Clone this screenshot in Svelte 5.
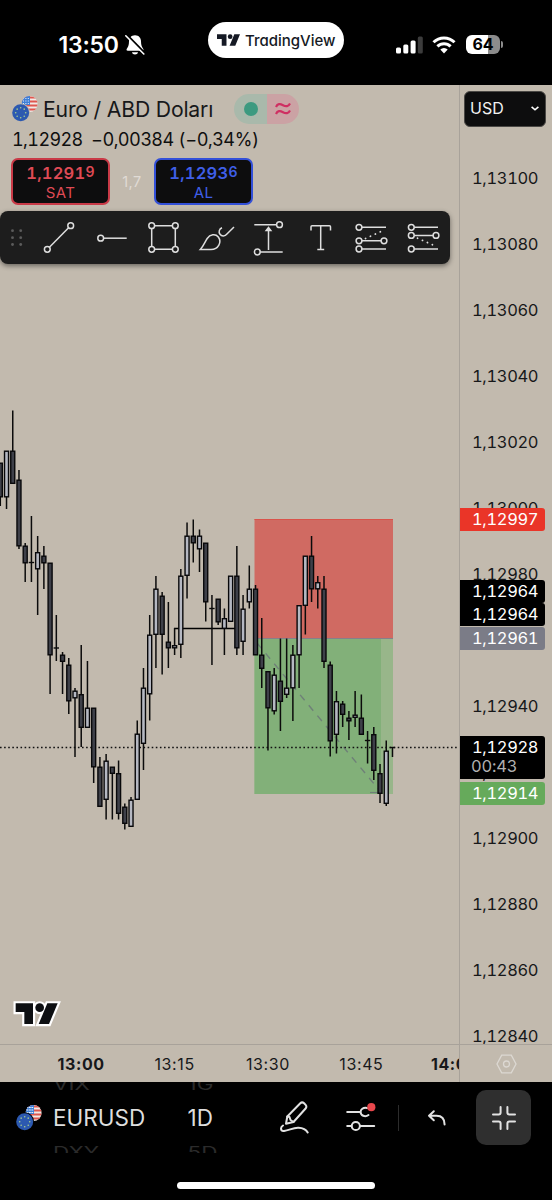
<script lang="ts">
  interface Candle {
    x: number;
    high: number;
    top: number;
    bottom: number;
    low: number;
    up: boolean;
  }

  const STEP = 6.225;
  const CHART_TOP = 85;

  // high, top, bottom, low, rising
  const rows: [number, number, number, number, number][] = [
    [463, 463, 497, 506, 0],
    [451, 451, 497, 509, 1],
    [410.5, 451, 483.5, 483.5, 0],
    [470, 480, 546, 549, 0],
    [543, 546, 563, 582, 0],
    [516, 562.5, 562.5, 582, 0],
    [536, 552.5, 569, 615, 1],
    [546, 556, 563, 589, 0],
    [563, 563, 655, 694, 0],
    [615, 648, 648, 661, 0],
    [652, 655, 661.5, 694, 0],
    [658, 665, 701, 714, 0],
    [688, 691, 698, 757, 1],
    [645, 694.5, 727.5, 747, 0],
    [661, 708, 727.5, 727.5, 1],
    [708, 708, 767, 783, 0],
    [757, 767, 806.5, 806.5, 0],
    [754, 761, 799.5, 819.5, 1],
    [767, 767, 773.5, 819.5, 0],
    [760.5, 773.5, 813.5, 819.5, 0],
    [803.5, 807, 823.5, 829.5, 0],
    [797, 800, 826.5, 826.5, 1],
    [720.5, 734, 799.5, 799.5, 1],
    [668, 688, 743.5, 770, 1],
    [615, 635, 694, 720.5, 1],
    [576, 589, 634.5, 668, 1],
    [592, 596, 634.5, 674.5, 0],
    [602, 642, 648, 668, 0],
    [628, 645.5, 648, 655, 1],
    [569, 576, 644.5, 658, 1],
    [522.5, 536, 575.5, 598.5, 1],
    [519.5, 536, 543, 562.5, 0],
    [529.5, 536, 549, 572, 1],
    [543, 543, 602, 621.5, 0],
    [595, 608.5, 608.5, 665, 0],
    [599, 599, 622, 625, 0],
    [608.5, 618.5, 628.5, 655, 1],
    [576, 576, 621.5, 621.5, 1],
    [546, 576, 648, 655, 0],
    [595, 609, 641.5, 655, 1],
    [565.5, 589, 602, 608.5, 1],
    [585, 589, 655, 655, 0],
    [618, 655, 668.5, 688, 0],
    [671.5, 671.5, 708, 750.5, 0],
    [668, 675, 711, 714.5, 1],
    [638.5, 681, 701.5, 731, 0],
    [638.5, 688, 694.5, 698, 1],
    [645, 655, 688, 721, 1],
    [605.5, 605.5, 655, 688, 1],
    [556, 556, 605.5, 634.5, 1],
    [536, 556, 589, 602, 0],
    [576, 582.5, 589, 608.5, 1],
    [576, 589, 661.5, 668, 0],
    [661.5, 665, 741, 756.5, 0],
    [691, 701.5, 734.5, 753.5, 1],
    [701, 704, 714.5, 727, 0],
    [711, 718, 721, 740, 0],
    [691, 715, 717.5, 727, 1],
    [694.5, 718, 734.5, 734.5, 0],
    [731, 740.5, 740.5, 763.5, 0],
    [727, 734.5, 770.5, 780, 0],
    [764, 773.5, 793.5, 803, 0],
    [740.5, 751, 803.5, 806, 1],
    [747.5, 747.5, 747.5, 757, 0],
  ];

  const candles: Candle[] = rows.map(([high, top, bottom, low, up], i) => ({
    x: 0.3 + i * STEP,
    high: high - CHART_TOP,
    top: top - CHART_TOP,
    bottom: bottom - CHART_TOP,
    low: low - CHART_TOP,
    up: up === 1,
  }));

  const prices = Array.from({ length: 14 }, (_, i) => "1," + (13100 - i * 20));

  const tags = [
    { text: "1,12997", y: 423, kind: "stop" },
    { text: "1,12964", y: 495, kind: "dark" },
    { text: "1,12964", y: 518, kind: "dark" },
    { text: "1,12961", y: 542, kind: "entry" },
    { text: "1,12914", y: 697, kind: "target" },
  ];

  const times = ["13:00", "13:15", "13:30", "13:45", "14:00"];
  const stars = Array.from({ length: 8 }, (_, i) => (i * Math.PI) / 4);
</script>

{#snippet logo()}
  <path d="M0 0H52V62H26V26H0Z" />
  <circle cx="72" cy="13" r="13" />
  <path d="M95 0H126L100 62H69Z" />
{/snippet}

{#snippet flags(ring: string)}
  <svg class="flags" width="28" height="28" viewBox="0 0 28 28">
    <clipPath id="us"><circle cx="18.6" cy="9" r="8" /></clipPath>
    <g clip-path="url(#us)">
      <rect x="10" width="18" height="18" fill="#f1e9e6" />
      <path d="M10 2.5h18M10 6.5h18M10 10.5h18M10 14.5h18" stroke="#e0574f" stroke-width="2" />
      <rect x="10" y="0" width="9" height="10" fill="#3f7fd6" />
      <path d="M12 3.5h6.5M12 6h6.5M12 8.5h6.5" stroke="#e8f0fb" stroke-width="1" stroke-dasharray="1 1.4" />
    </g>
    <circle cx="9.7" cy="17.7" r="9.4" fill={ring} />
    <circle cx="9.7" cy="17.7" r="8.5" fill="#2c59b0" />
    {#each stars as a}
      <circle cx={9.7 + 5 * Math.cos(a)} cy={17.7 + 5 * Math.sin(a)} r="0.8" fill="#a9cf8c" />
    {/each}
  </svg>
{/snippet}

<div class="screen">
  <header class="status">
    <div class="clock">
      <span>13:50</span>
      <svg width="20" height="22" viewBox="0 0 20 22">
        <path d="M10 1.2c-4 0-6 3-6 6.3 0 4-1 5.5-2.3 7.5-.5 1 0 1.7 1 1.7h14.6c1 0 1.5-.7 1-1.7C17 13 16 11.5 16 7.5c0-3.3-2-6.3-6-6.3Z" fill="#fff" />
        <path d="M7 18.2h6c-.4 3-5.6 3-6 0Z" fill="#fff" />
        <path d="M1.8.8 20 19.2" stroke="#000" stroke-width="2.2" />
        <path d="M.8 1.8 18.8 20" stroke="#fff" stroke-width="1.6" stroke-linecap="round" />
      </svg>
    </div>
    <div class="pill">
      <svg width="23" height="12" viewBox="0 0 126 62" fill="#151924">{@render logo()}</svg>
      <span>TradingView</span>
    </div>
    <div class="indicators">
      <svg width="27" height="18" viewBox="0 0 27 18" fill="#fff">
        <rect x="0" y="11.5" width="5" height="6" rx="1.5" />
        <rect x="7.3" y="8.5" width="5" height="9" rx="1.5" />
        <rect x="14.6" y="4.5" width="5" height="13" rx="1.5" />
        <rect x="21.8" y="0.5" width="5" height="17" rx="1.5" fill="#3c3c3c" />
      </svg>
      <svg class="wifi" width="24" height="18" viewBox="0 0 24 18" fill="none" stroke="#fff" stroke-width="3">
        <path d="M1.5 6.3a15 15 0 0 1 21 0" />
        <path d="M5.4 10.4a9.4 9.4 0 0 1 13.2 0" />
        <path d="M8.3 13.6a5.3 5.3 0 0 1 7.4 0L12 17.5Z" fill="#fff" stroke="none" />
      </svg>
      <div class="battery"><span>64</span></div>
    </div>
  </header>

  <main class="workspace">
    <section class="chart">
      <svg class="plot" width="459" height="959" viewBox="0 0 459 959">
        <rect x="254.5" y="434" width="138.5" height="119.5" fill="#d06a62" />
        <path d="M254.5 434.5H393" stroke="#d9534b" />
        <rect x="254.5" y="553.5" width="138.5" height="155.5" fill="#98b68a" />
        <rect x="254.5" y="553.5" width="126.5" height="155.5" fill="#82b079" />
        <path d="M254.5 553.5H393" stroke="#85808a" />
        <path d="M257 558 L380 706" stroke="#6f8078" stroke-width="1.4" stroke-dasharray="7 6.5" />
        <path d="M370 707.5h10" stroke="#6f8078" stroke-width="1.2" />
        <path d="M174 543.5H238" stroke="#000" stroke-width="1.3" />
        <path d="M0 662.5H459" stroke="#111" stroke-width="1.5" stroke-dasharray="1.6 2.5" />
        {#each candles as c}
          <path d="M{c.x} {c.high}V{c.low}" stroke="#0b0b0b" stroke-width="1.5" />
          {#if c.bottom - c.top < 1}
            <path d="M{c.x - 2.7} {c.top}h5.4" stroke="#0b0b0b" stroke-width="1.4" />
          {:else}
            <rect
              x={c.x - 2}
              y={c.top + 0.2}
              width="4"
              height={Math.max(c.bottom - c.top - 0.4, 1.5)}
              fill={c.up ? "#b5b8c2" : "#3e4049"}
              stroke="#08080a"
              stroke-width="1.4"
            />
          {/if}
        {/each}
      </svg>

      <div class="legend">
        <div class="title">
          {@render flags("#c2baae")}
          <h1>Euro / ABD Doları</h1>
          <div class="market">
            <span class="open"><i></i></span>
            <span class="approx">
              <svg width="16" height="14" viewBox="0 0 16 14" fill="none" stroke="#cf2f62" stroke-width="2.2">
                <path d="M1 5C2.5 1.5 5 1.5 8 3.2S13.5 4.5 15 1.5M1 12C2.5 8.5 5 8.5 8 10.2S13.5 11.5 15 8.5" />
              </svg>
            </span>
          </div>
        </div>
        <p class="quote"><span class="last-price">1,12928</span><span>−0,00384 (−0,34%)</span></p>
        <div class="trade">
          <button class="sell"><b>1,1291<small>9</small></b><span>SAT</span></button>
          <span class="spread">1,7</span>
          <button class="buy"><b>1,1293<small>6</small></b><span>AL</span></button>
        </div>
        <div class="tools">
          <svg class="grip" width="33" height="53" viewBox="0 0 33 53" fill="#5c5c5c">
            {#each [19.7, 26.7, 33.5] as y}
              <circle cx="12.5" cy={y} r="1.4" />
              <circle cx="20.7" cy={y} r="1.4" />
            {/each}
          </svg>
          <svg class="tool" viewBox="0 0 52 53">
            <path d="M16.4 36.2 35.6 16.8" />
            <circle cx="14.3" cy="38.3" r="2.9" /><circle cx="37.7" cy="14.7" r="2.9" />
          </svg>
          <svg class="tool" viewBox="0 0 52 53">
            <circle cx="15.7" cy="27.2" r="2.9" /><path d="M18.6 27.2H41.7" />
          </svg>
          <svg class="tool" viewBox="0 0 52 53">
            <path d="M17.6 14.7h17.8M17.6 38.3h17.8M14.7 17.6v17.8M38.3 17.6v17.8" />
            <circle cx="14.7" cy="14.7" r="2.9" /><circle cx="38.3" cy="14.7" r="2.9" />
            <circle cx="14.7" cy="38.3" r="2.9" /><circle cx="38.3" cy="38.3" r="2.9" />
          </svg>
          <svg class="tool" viewBox="0 0 52 53">
            <path d="M11.3 38.4C15 34.5 15.8 31 18.2 27.5 21 23.3 26.5 22.5 29.3 26 33 31 29.5 38.4 22 38.4Z" />
            <path d="M33 16.8C30.2 18 29.3 21 31 23.3S35.8 25.7 38.2 22.8L45 16" />
          </svg>
          <svg class="tool" viewBox="0 0 52 53">
            <path d="M13.3 13.7H35.6M19.2 41H41.7M27.5 39V17" />
            <circle cx="38.5" cy="13.7" r="2.9" /><circle cx="16.3" cy="41" r="2.9" />
            <path d="M25.2 19.5 27.5 16.5 29.8 19.5Z" fill="#dedede" />
          </svg>
          <svg class="tool" viewBox="0 0 52 53">
            <path d="M18 19.5V15.8q0-1 1-1h17.5q1 0 1 1v3.7M27.7 14.8v23.7M24.3 38.5h6.9" />
          </svg>
          <svg class="tool" viewBox="0 0 52 53">
            <path d="M16.9 16.3H41M16.9 29.8H36.2M16.9 38H41" />
            <path class="dots" d="M20.5 27.5 40 18.7" />
            <circle cx="14" cy="16.3" r="2.9" /><circle cx="14" cy="29.8" r="2.9" />
            <circle cx="39" cy="29.8" r="2.9" /><circle cx="14" cy="38" r="2.9" />
          </svg>
          <svg class="tool" viewBox="0 0 52 53">
            <path d="M17.2 16.3H41M17.2 24.4H36.2M17.2 38H41" />
            <path class="dots" d="M20.5 27.2 40 35.7" />
            <circle cx="14.3" cy="16.3" r="2.9" /><circle cx="14.3" cy="24.4" r="2.9" />
            <circle cx="39" cy="24.4" r="2.9" /><circle cx="14.3" cy="38" r="2.9" />
          </svg>
        </div>
      </div>

      <svg class="watermark" width="48" height="27" viewBox="-8 -10 144 81">
        <g fill="#fff" stroke="#fff" stroke-width="13">{@render logo()}</g>
        <g fill="#0d0f12">{@render logo()}</g>
      </svg>
    </section>

    <aside class="scale">
      <div class="labels">
        {#each prices as price}
          <span>{price}</span>
        {/each}
      </div>
      {#each tags as tag}
        <div class="tag {tag.kind}" style:top="{tag.y}px">{tag.text}</div>
      {/each}
      <div class="tag dark last" style:top="651px">
        <span>1,12928</span>
        <span class="countdown">00:43</span>
      </div>
      <div class="currency">
        <span>USD</span>
        <svg width="8" height="5" viewBox="0 0 8 5" fill="none" stroke="#fff" stroke-width="1.6">
          <path d="M.6 .8 4 3.8 7.4 .8" />
        </svg>
      </div>
    </aside>

    <div class="times">
      {#each times as time, i}
        <span class:hour={i % 4 === 0}>{time}</span>
      {/each}
    </div>
    <div class="corner">
      <svg width="21" height="20" viewBox="0 0 21 20" fill="none" stroke="#dcd8d2" stroke-width="1.3">
        <path d="M5.7 1.2h9.6L20 10l-4.7 8.8H5.7L1 10Z" />
        <circle cx="10.5" cy="10" r="3" />
      </svg>
    </div>
  </main>

  <footer class="dock">
    <div class="bar">
      {@render flags("#000")}
      <div class="wheel symbol">
        <span class="ghost">VIX</span>
        <span>EURUSD</span>
        <span class="ghost">DXY</span>
      </div>
      <div class="wheel interval">
        <span class="ghost">1G</span>
        <span>1D</span>
        <span class="ghost">5D</span>
      </div>
      <svg class="pen" width="30" height="34" viewBox="0 0 30 34">
        <path d="M7.3 15.5 20.3 2.3q1.800-1.800 3.800 0l1.500 1.600q1.500 1.900 0 3.600L13.500 21 6 22.800Z" />
        <path d="M7.3 15.5 9.5 16l1 3 3 2" />
        <path d="M3 24.5C0 26.5.5 30.5 4 30 9.5 29.3 13 26.5 18.5 26.8 23 27 26 28.5 27.7 31.5" />
      </svg>
      <svg class="sliders" width="32" height="34" viewBox="0 0 32 34">
        <path d="M2.2 11H15.5M2.2 25H6.5M15 25H29.2M22 7C18 6.3 15.600 8.500 15.600 11 15.600 14.500 20 16.500 23.500 14" />
        <circle cx="10.8" cy="25" r="4.1" />
        <circle class="dot" cx="26.3" cy="6.2" r="4.1" />
      </svg>
      <i class="divider"></i>
      <svg class="undo" width="20" height="18" viewBox="0 0 20 18">
        <path d="M6.8 2.3 2 6.8 6.8 11.3M2 6.8H9.5C14.5 6.8 17.6 9.5 17.6 15.6" />
      </svg>
      <button class="collapse" aria-label="Collapse">
        <svg width="24" height="24" viewBox="0 0 24 24">
          <path d="M8.6 1V6.6q0 2-2 2H1M15.4 1V6.6q0 2 2 2H23M1 15.4H6.6q2 0 2 2V23M23 15.4H17.4q-2 0-2 2V23" />
        </svg>
      </button>
    </div>
    <div class="home"></div>
  </footer>
</div>

<style>
  :global(body) {
    background: #000;
  }

  .screen {
    width: 552px;
    height: 1200px;
    overflow: hidden;
    display: flex;
    flex-direction: column;
    font-family: Inter, "Liberation Sans", sans-serif;
    background: #000;
    color: #17181a;
  }
  svg {
    display: block;
    flex: none;
  }

  .status {
    height: 85px;
    box-sizing: border-box;
    display: flex;
    align-items: flex-start;
    color: #fff;
  }
  .clock {
    width: 149.5px;
    padding: 34px 0 0 58.5px;
    display: flex;
    align-items: center;
    gap: 6px;
    font-size: 23px;
    line-height: 22px;
    font-weight: 600;
    letter-spacing: -0.2px;
  }
  .pill {
    flex: none;
    width: 136px;
    height: 36px;
    margin-top: 22px;
    box-sizing: border-box;
    padding-left: 9px;
    border-radius: 18px;
    background: #fff;
    color: #151924;
    display: flex;
    align-items: center;
    gap: 5px;
    font-size: 15px;
    font-weight: 500;
    font-feature-settings: "cv11";
  }
  .indicators {
    display: flex;
    align-items: center;
    padding: 35px 0 0 51.5px;
  }
  .wifi {
    margin: 0 10px 0 9.5px;
  }
  .battery {
    position: relative;
    width: 34px;
    height: 19px;
    border-radius: 6px;
    background: linear-gradient(90deg, #fff 64%, #8c8c8c 64%);
    color: #000;
    text-align: center;
    font-size: 16px;
    line-height: 19px;
    font-weight: 700;
  }
  .battery::after {
    content: "";
    position: absolute;
    right: -3px;
    top: 6px;
    width: 2px;
    height: 7px;
    border-radius: 0 2px 2px 0;
    background: #8c8c8c;
  }

  .workspace {
    height: 997px;
    display: grid;
    grid-template: 959px 38px / 459px 93px;
    background: #c2baae;
  }
  .chart {
    display: grid;
    overflow: hidden;
  }
  .plot,
  .legend,
  .watermark {
    grid-area: 1 / 1;
  }
  .watermark {
    align-self: end;
    margin: 0 0 17px 13px;
  }

  .legend {
    padding-top: 8px;
  }
  .title {
    display: flex;
    align-items: center;
    height: 31px;
    padding-left: 11px;
  }
  h1 {
    width: 174px;
    margin: 0 0 0 4px;
    font-size: 21.2px;
    font-weight: 400;
    letter-spacing: -0.19px;
    white-space: nowrap;
  }
  .market {
    display: flex;
    margin-left: 17px;
    border-radius: 15px;
    overflow: hidden;
  }
  .market span {
    width: 32.5px;
    height: 30px;
    display: flex;
    align-items: center;
    justify-content: center;
  }
  .market .open {
    background: #a9b9ab;
  }
  .market .approx {
    background: #cba2a4;
  }
  .open i {
    width: 14px;
    height: 14px;
    margin-left: 2px;
    border-radius: 50%;
    background: #3c9a80;
  }
  .quote {
    display: flex;
    margin: 4px 0 0 12px;
    font-size: 18px;
    line-height: 24px;
    letter-spacing: -0.15px;
    color: #0f0f0f;
  }
  .quote .last-price {
    width: 79px;
    letter-spacing: -0.6px;
    font-kerning: none;
    font-variant-numeric: tabular-nums;
  }
  .trade {
    display: flex;
    align-items: center;
    margin: 6px 0 0 11px;
  }
  .trade button {
    width: 99px;
    height: 47px;
    padding: 0;
    box-sizing: border-box;
    border: 2px solid;
    border-radius: 7px;
    background: #0d0d0e;
    font: inherit;
    display: flex;
    flex-direction: column;
    align-items: center;
    justify-content: center;
    gap: 1px;
  }
  .trade b {
    font-size: 16.5px;
    line-height: 19px;
    font-weight: 600;
    letter-spacing: 0.2px;
    font-kerning: none;
    font-variant-numeric: tabular-nums;
  }
  .trade small {
    font-size: 14px;
    vertical-align: 2px;
  }
  .trade button span {
    font-size: 15px;
    line-height: 18px;
    letter-spacing: 0.4px;
  }
  .trade .sell {
    border-color: #c93a47;
    color: #df4a55;
  }
  .trade .buy {
    border-color: #3350d8;
    color: #3f5fe8;
  }
  .spread {
    width: 44px;
    text-align: center;
    font-size: 14.5px;
    font-kerning: none;
    letter-spacing: 0.4px;
    color: #e0dbd5;
  }
  .tools {
    display: flex;
    width: 450px;
    height: 53px;
    margin-top: 6px;
    border-radius: 8px;
    background: #1d1d1d;
    box-shadow: 0 2px 5px rgba(0, 0, 0, 0.45);
  }
  .tool {
    width: 52px;
    height: 53px;
    fill: none;
    stroke: #dedede;
    stroke-width: 1.5;
  }
  .tool .dots {
    stroke-width: 1.8;
    stroke-linecap: round;
    stroke-dasharray: 0.1 5.3;
  }

  .scale {
    position: relative;
    overflow: hidden;
    border-left: 1px solid #a8a29a;
    font-size: 16.5px;
    letter-spacing: -0.35px;
    font-kerning: none;
    font-variant-numeric: tabular-nums;
  }
  .labels {
    padding: 60px 0 0 12px;
    display: flex;
    flex-direction: column;
  }
  .labels span {
    flex: none;
    height: 66px;
    line-height: 66px;
  }
  .tag {
    position: absolute;
    left: 0;
    width: 85px;
    height: 23px;
    box-sizing: border-box;
    padding-left: 12px;
    border-radius: 0 3px 3px 0;
    color: #fff;
    line-height: 22px;
  }
  .stop {
    background: #ea3528;
  }
  .dark {
    background: #000;
  }
  .entry {
    background: #7b7c87;
  }
  .target {
    background: #66aa5b;
  }
  .last {
    height: 42.5px;
    display: flex;
    flex-direction: column;
  }
  .last .countdown {
    margin-left: -1px;
    line-height: 16px;
    letter-spacing: -0.2px;
    color: #b0b0b0;
  }
  .currency {
    position: absolute;
    left: 4px;
    top: 5.5px;
    width: 82px;
    height: 36px;
    box-sizing: border-box;
    padding: 0 6px 1px 5px;
    border: 1px solid #4a4845;
    border-radius: 6px;
    background: #0d0d0e;
    color: #f2f2f2;
    display: flex;
    align-items: center;
    justify-content: space-between;
    font-size: 16px;
    letter-spacing: 0;
  }

  .times {
    display: flex;
    overflow: hidden;
    padding-left: 34.5px;
    border-top: 1px solid #a8a29a;
    font-size: 16px;
    line-height: 38px;
    letter-spacing: 0.6px;
  }
  .times span {
    flex: none;
    width: 93.4px;
    text-align: center;
  }
  .times .hour {
    font-weight: 700;
  }
  .corner {
    border-left: 1px solid #a8a29a;
    border-top: 1px solid #a8a29a;
    display: flex;
    align-items: center;
    justify-content: center;
  }

  .dock {
    height: 118px;
    display: flex;
    flex-direction: column;
    align-items: center;
  }
  .bar {
    width: 100%;
    height: 72px;
    box-sizing: border-box;
    padding: 0 0 1px 15px;
    display: flex;
    align-items: center;
  }
  .bar svg {
    fill: none;
    stroke: #e2e2e2;
    stroke-width: 2;
    stroke-linecap: round;
    stroke-linejoin: round;
  }
  .bar .flags {
    stroke: none;
  }
  .wheel {
    height: 71px;
    overflow: hidden;
    display: flex;
    flex-direction: column;
    justify-content: center;
    font-size: 22.5px;
    line-height: 34px;
    color: #dedede;
  }
  .wheel span {
    flex: none;
  }
  .symbol {
    width: 134.5px;
    margin-left: 10px;
  }
  .interval {
    width: 92.5px;
  }
  .ghost {
    color: #2b2b2b;
    transform: scaleY(0.7);
  }
  .bar .sliders {
    margin-left: 34.5px;
  }
  .bar .dot {
    fill: #e8474c;
    stroke: none;
  }
  .divider {
    width: 1px;
    height: 26px;
    margin: 0 28px 0 21.5px;
    background: #2c2c2c;
  }
  .collapse {
    width: 55px;
    height: 55px;
    margin-left: 29px;
    padding: 0;
    border: 0;
    border-radius: 10px;
    background: #2f2f2f;
    display: flex;
    align-items: center;
    justify-content: center;
  }
  .home {
    width: 198px;
    height: 7px;
    margin-top: 28px;
    border-radius: 4px;
    background: #fff;
  }
</style>
